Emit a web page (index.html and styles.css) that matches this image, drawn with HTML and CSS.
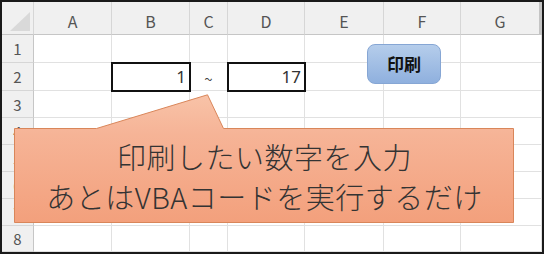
FILE: index.html
```html
<!DOCTYPE html>
<html lang="ja">
<head>
<meta charset="utf-8">
<link rel="stylesheet" href="styles.css">
</head>
<body>
<div class="sheet">
  <div class="grid">
    <div class="hd corner"><span class="tri"></span></div>
    <div class="hd col">A</div>
    <div class="hd col">B</div>
    <div class="hd col">C</div>
    <div class="hd col">D</div>
    <div class="hd col">E</div>
    <div class="hd col">F</div>
    <div class="hd col last">G</div>

    <div class="rh">1</div><div class="c"></div><div class="c"></div><div class="c"></div><div class="c"></div><div class="c"></div><div class="c"></div><div class="c"></div>
    <div class="rh">2</div><div class="c"></div><div class="c num box">1</div><div class="c tilde">~</div><div class="c num box">17</div><div class="c"></div><div class="c"></div><div class="c"></div>
    <div class="rh">3</div><div class="c"></div><div class="c"></div><div class="c"></div><div class="c"></div><div class="c"></div><div class="c"></div><div class="c"></div>
    <div class="rh">4</div><div class="c"></div><div class="c"></div><div class="c"></div><div class="c"></div><div class="c"></div><div class="c"></div><div class="c"></div>
    <div class="rh">5</div><div class="c"></div><div class="c"></div><div class="c"></div><div class="c"></div><div class="c"></div><div class="c"></div><div class="c"></div>
    <div class="rh">6</div><div class="c"></div><div class="c"></div><div class="c"></div><div class="c"></div><div class="c"></div><div class="c"></div><div class="c"></div>
    <div class="rh">7</div><div class="c"></div><div class="c"></div><div class="c"></div><div class="c"></div><div class="c"></div><div class="c"></div><div class="c"></div>
    <div class="rh">8</div><div class="c"></div><div class="c"></div><div class="c"></div><div class="c"></div><div class="c"></div><div class="c"></div><div class="c"></div>
  </div>

  <div class="print-btn">印刷</div>

  <div class="callout">
    <svg class="callout-shape" width="501" height="130" viewBox="0 0 501 130">
      <defs>
        <linearGradient id="sal" x1="0" y1="0" x2="0" y2="1">
          <stop offset="0" stop-color="#f8c3a8"/>
          <stop offset="0.3" stop-color="#f6b497"/>
          <stop offset="1" stop-color="#f3a07c"/>
        </linearGradient>
      </defs>
      <path d="M0.5 34.5 H82.5 L193.5 0.8 L209.5 34.5 H499.5 V128.5 H0.5 Z" fill="url(#sal)" stroke="#d9865a" stroke-width="1"/>
    </svg>
    <div class="callout-text">
      <div>印刷したい数字を入力</div>
      <div>あとはVBAコードを実行するだけ</div>
    </div>
  </div>
</div>
</body>
</html>
```

FILE: styles.css
```css
html, body {
  margin: 0;
  padding: 0;
  background: #ffffff;
}

.sheet {
  position: relative;
  width: 544px;
  height: 254px;
  box-sizing: border-box;
  border: 2px solid #1a1a1a;
  overflow: hidden;
  font-family: "Noto Sans CJK JP", "Noto Sans", sans-serif;
}

.grid {
  display: grid;
  grid-template-columns: 32px 78px 78px 38px 77px 79px 77px 81px;
  grid-template-rows: 33px 28px 28px 27px 27px 27px 27px 27px 26px;
}

.hd {
  box-sizing: border-box;
  background: #f0f0f0;
  border-right: 1px solid #d6d6d6;
  border-bottom: 1px solid #c6c6c6;
  color: #555555;
  font-size: 16px;
  display: flex;
  align-items: center;
  justify-content: center;
  padding-top: 6px;
}

.hd.last {
  border-right: 3px solid #c4c4c4;
}

.corner {
  position: relative;
  padding: 0;
}

.tri {
  position: absolute;
  right: 3px;
  bottom: 3px;
  width: 20px;
  height: 19px;
  background: #d9d9d9;
  clip-path: polygon(100% 0, 100% 100%, 0 100%);
}

.rh {
  box-sizing: border-box;
  background: #f0f0f0;
  border-right: 1px solid #c6c6c6;
  border-bottom: 1px solid #d6d6d6;
  color: #555555;
  font-size: 15px;
  display: flex;
  align-items: center;
  justify-content: center;
}

.c {
  box-sizing: border-box;
  border-right: 1px solid #e1e1e1;
  border-bottom: 1px solid #e1e1e1;
  color: #333333;
  font-size: 17px;
  display: flex;
  align-items: center;
}

.num {
  justify-content: flex-end;
  padding-right: 3px;
  font-family: "Noto Sans", sans-serif;
}

.box {
  outline: 2px solid #111111;
  outline-offset: -1px;
  position: relative;
  z-index: 1;
}

.tilde {
  justify-content: center;
  font-size: 15px;
  color: #444444;
  padding-top: 3px;
}

.print-btn {
  position: absolute;
  left: 365px;
  top: 42px;
  width: 74px;
  height: 40px;
  box-sizing: border-box;
  border: 1px solid #86a6d4;
  border-radius: 8px;
  background: linear-gradient(#b5cdeb, #8fb0de);
  display: flex;
  align-items: center;
  justify-content: center;
  font-weight: 700;
  font-size: 17px;
  color: #111111;
  padding-bottom: 2px;
}

.callout {
  position: absolute;
  left: 12px;
  top: 92px;
  width: 501px;
  height: 130px;
}

.callout-shape {
  position: absolute;
  left: 0;
  top: 0;
  display: block;
}

.callout-text {
  position: absolute;
  left: 0;
  top: 35px;
  width: 501px;
  height: 94px;
  display: flex;
  flex-direction: column;
  align-items: center;
  justify-content: center;
  font-size: 29px;
  line-height: 40px;
  color: #333333;
  font-weight: 300;
  letter-spacing: 0.5px;
}
```
